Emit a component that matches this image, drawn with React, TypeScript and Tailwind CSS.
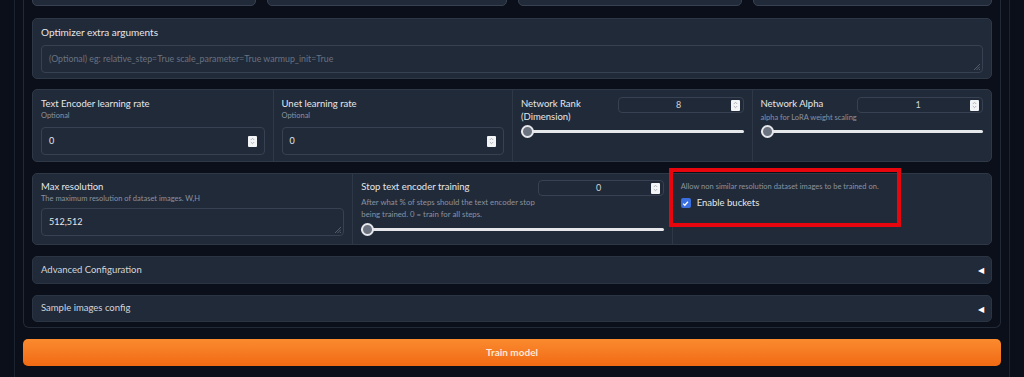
import React from "react";

const font = { fontFamily: "Lato, 'Noto Sans', sans-serif" };

function Spinner() {
  return (
    <span className="flex flex-col items-center justify-center w-[9px] h-[11px] bg-[#f3f4f6] rounded-[1px]">
      <svg width="5" height="8" viewBox="0 0 5 8" fill="none" stroke="#9ca3af" strokeWidth="0.8">
        <path d="M0.8 3 L2.5 1.3 L4.2 3" />
        <path d="M0.8 5 L2.5 6.7 L4.2 5" />
      </svg>
    </span>
  );
}

function NumberBox({ value }: { value: string }) {
  return (
    <div className="flex items-center h-[16px] w-[126px] border border-[#374151] rounded-[4px] bg-[#1f2937] pl-2 pr-[3px]">
      <span className="flex-1 text-center text-[9px] text-[#d1d5db]">{value}</span>
      <Spinner />
    </div>
  );
}

function Slider() {
  return (
    <div className="relative h-[14px] flex items-center">
      <div className="w-full h-[3px] rounded-full bg-[#e5e7eb]" />
      <div className="absolute left-0 w-[13px] h-[13px] rounded-full bg-[#6b7280] border-2 border-[#e5e7eb]" />
    </div>
  );
}

function Accordion({ title, h }: { title: string; h: string }) {
  return (
    <div className={`flex items-center justify-between ${h} pl-2 pr-[7px] bg-[#212a38] border border-[#2b3442] rounded-[5px]`}>
      <span className="text-[9.5px] text-[#d1d5db]">{title}</span>
      <span className="text-[8px] text-white">◀</span>
    </div>
  );
}

function Resize() {
  return (
    <svg className="absolute right-[2px] bottom-[2px]" width="6" height="6" viewBox="0 0 6 6" stroke="#6b7280" strokeWidth="0.7">
      <path d="M0 6 L6 0 M2.5 6 L6 2.5 M5 6 L6 5" />
    </svg>
  );
}

export default function App() {
  return (
    <div className="w-full h-[377px] bg-[#0b0f19] overflow-hidden" style={font}>
      <div className="mx-[14px] h-full border-x border-[#1c2230] px-[8px] flex flex-col">
        <div className="-mt-[34px] border border-t-0 border-[#232a37] rounded-b-[6px] px-[8px] pb-[5px] flex flex-col gap-[11px]">
          <div className="grid grid-cols-[224px_240px_224px_1fr] gap-[11px]">
            {[0, 1, 2, 3].map((i) => (
              <div key={i} className="h-[40px] bg-[#212a38] border border-[#374151] rounded-[5px]" />
            ))}
          </div>

          <div className="mt-px bg-[#212a38] border border-[#2f3847] rounded-[5px] px-2 pt-[7px] pb-[5px]">
            <div className="text-[10px] text-[#e5e7eb] leading-[13px]">Optimizer extra arguments</div>
            <div className="relative mt-[6px] h-[28px] border border-[#374151] rounded-[4px] flex items-center px-[7px]">
              <span className="text-[8.8px] text-[#6b7280]">
                (Optional) eg: relative_step=True scale_parameter=True warmup_init=True
              </span>
              <Resize />
            </div>
          </div>

          <div className="-mt-px grid grid-cols-4 bg-[#212a38] border border-[#2f3847] rounded-[5px] h-[73px]">
            {["Text Encoder learning rate", "Unet learning rate"].map((t, i) => (
              <div key={t} className={`px-2 pt-[7px] ${i > 0 ? "border-l border-[#2f3847]" : ""}`}>
                <div className="text-[9.5px] text-[#e5e7eb] leading-[13px]">{t}</div>
                <div className="text-[7.5px] text-[#8b93a1] leading-[11px]">Optional</div>
                <div className="mt-[6px] h-[28px] border border-[#374151] rounded-[4px] flex items-center pl-[7px] pr-[7px]">
                  <span className="flex-1 text-[9px] text-[#e5e7eb]">0</span>
                  <Spinner />
                </div>
              </div>
            ))}
            <div className="px-2 pt-[7px] border-l border-[#2f3847]">
              <div className="flex justify-between">
                <div className="text-[9.5px] text-[#e5e7eb] leading-[13px]">
                  Network Rank
                  <br />
                  (Dimension)
                </div>
                <NumberBox value="8" />
              </div>
              <div className="mt-[1px]">
                <Slider />
              </div>
            </div>
            <div className="px-2 pt-[7px] border-l border-[#2f3847]">
              <div className="flex justify-between">
                <div className="text-[9.5px] text-[#e5e7eb] leading-[13px]">Network Alpha</div>
                <NumberBox value="1" />
              </div>
              <div className="text-[7.5px] text-[#8b93a1] leading-[10px]">alpha for LoRA weight scaling</div>
              <div className="mt-[1px]">
                <Slider />
              </div>
            </div>
          </div>

          <div className="grid grid-cols-3 bg-[#212a38] border border-[#2f3847] rounded-[5px] h-[72px]">
            <div className="px-2 pt-[6px]">
              <div className="text-[9.5px] text-[#e5e7eb] leading-[13px]">Max resolution</div>
              <div className="text-[7.5px] text-[#8b93a1] leading-[11px]">The maximum resolution of dataset images. W,H</div>
              <div className="relative mt-[4px] h-[28px] border border-[#374151] rounded-[4px] flex items-center px-[7px]">
                <span className="text-[9px] text-[#e5e7eb]">512,512</span>
                <Resize />
              </div>
            </div>
            <div className="px-2 pt-[6px] border-l border-[#2f3847]">
              <div className="flex justify-between">
                <div className="text-[9.5px] text-[#e5e7eb] leading-[13px]">Stop text encoder training</div>
                <NumberBox value="0" />
              </div>
              <div className="text-[7.8px] text-[#8b93a1] leading-[12px] max-w-[176px]">
                After what % of steps should the text encoder stop being trained. 0 = train for all steps.
              </div>
              <div className="mt-[2px]">
                <Slider />
              </div>
            </div>
            <div className="relative px-2 pt-[8px] border-l border-[#2f3847]">
              <div className="text-[7.5px] text-[#8b93a1] leading-[10px]">
                Allow non similar resolution dataset images to be trained on.
              </div>
              <label className="mt-[4px] flex items-center gap-[6px]">
                <span className="flex items-center justify-center w-[10px] h-[10px] rounded-[2px] bg-[#3b6fe0]">
                  <svg width="7" height="7" viewBox="0 0 8 8" fill="none" stroke="white" strokeWidth="1.4">
                    <path d="M1.3 4.2 L3.2 6 L6.8 2" />
                  </svg>
                </span>
                <span className="text-[9.5px] text-[#e5e7eb]">Enable buckets</span>
              </label>
              <div className="absolute -left-[4px] -top-[6px] w-[232px] h-[59px] border-[4px] border-[#e8060e]" />
            </div>
          </div>

          <Accordion title="Advanced Configuration" h="h-[28px]" />
          <Accordion title="Sample images config" h="h-[27px]" />
        </div>

        <button className="mt-[11px] h-[27px] w-full rounded-[5px] bg-gradient-to-b from-[#fb8a2e] to-[#f06a12] text-[10px] font-bold text-[#fde9d8]">
          Train model
        </button>
      </div>
    </div>
  );
}
